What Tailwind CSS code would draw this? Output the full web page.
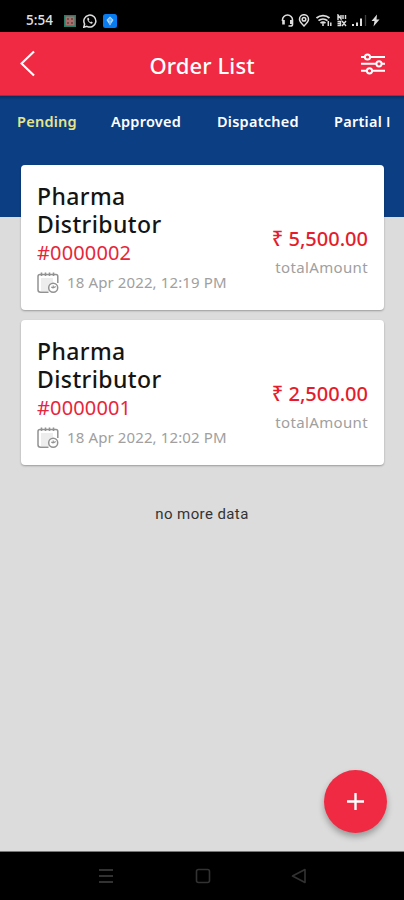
<!DOCTYPE html>
<html lang="en">
<head>
<meta charset="utf-8">
<title>Order List</title>
<script src="https://cdn.jsdelivr.net/npm/@tailwindcss/browser@4"></script>
</head>
<body class="font-['Noto_Sans',sans-serif]">
<svg class="hidden">
  <symbol id="calendar" viewBox="0 0 22 22">
    <path d="M4 6h12v8l-4 5H4z" fill="#ededed"/>
    <path d="M11.500 20.300H3.500Q1 20.300 1 17.800V4.500Q1 2.500 3 2.500H19Q20.800 2.500 20.800 4.300V11" fill="none" stroke="#929292" stroke-width="1.500"/>
    <path d="M4.500 .5v3.500M8.500 .5v3.500M12.500 .5v3.500M16.500 .5v3.500" stroke="#929292" stroke-width="1.600"/>
    <circle cx="16.200" cy="15.800" r="4.500" fill="#fff" stroke="#929292" stroke-width="1.500"/>
    <path d="M16.200 16V13.500M16.200 16l2.500-1.500M16.200 16l-2-1" stroke="#929292" stroke-width="1.200" fill="none"/>
  </symbol>
</svg>
<div class="flex h-[900px] w-[404px] flex-col overflow-hidden bg-[#dcdcdc]">
  <div class="flex h-8 shrink-0 items-center bg-black pt-[9px] pl-[26px] pr-[24px] text-[#dedede]">
    <span class="w-[38px] whitespace-nowrap font-['Open_Sans',sans-serif] text-[13.500px] font-semibold leading-none">5:54</span>
    <svg class="h-3 w-3" viewBox="0 0 12 12"><rect width="12" height="12" fill="#267d68"/><rect x="1.500" y="1.500" width="9" height="9" fill="#aa706b"/><path d="M3 3h2v2H3zM7 3h2v2H7zM3 7h2v2H3zM7 7h2v2H7z" fill="#704f4c"/></svg>
    <svg class="ml-[7px] h-[14px] w-[14px]" viewBox="0 0 14 14" fill="none" stroke="currentColor"><path d="M.8 13.200l.8-3.200a6 6 0 1 1 2.300 2.300z" stroke-width="1.500"/><path d="M4.600 3.800c-1 1.500.6 4.500 3 5.600 1.300.6 2 .1 2.200-.9L8.200 7.500l-.8.800C6.400 7.800 6 7.100 5.600 6.300l.8-.8-.8-1.700z" fill="currentColor" stroke="none"/></svg>
    <svg class="ml-[6px] h-[14px] w-[14px]" viewBox="0 0 14 14"><rect width="14" height="14" rx="2.500" fill="#087bf0"/><path d="M7 2.500L10.500 6 7 11.500 3.500 6z" fill="#b9dcff"/><path d="M7 4v6M5 6h4" stroke="#4aa1fb"/></svg>
    <div class="ml-auto flex items-center">
      <svg class="h-[13px] w-[13px]" viewBox="0 0 13 13" fill="none" stroke="currentColor" stroke-width="1.600"><path d="M1.500 7V6a5 5 0 0 1 10 0v4.500q0 1.500-2 1.500H7.500"/><path d="M2.500 6v4.500M10.300 6v4" stroke-width="2.600"/></svg>
      <svg class="ml-1 h-[13px] w-[12px]" viewBox="0 0 12 13" fill="none" stroke="currentColor" stroke-width="1.500"><path d="M6 12C3.500 9.500 1.500 7.500 1.500 5.200a4.500 4.500 0 0 1 9 0C10.500 7.500 8.500 9.500 6 12z"/><circle cx="6" cy="5.200" r="1.800"/></svg>
      <svg class="ml-[6px] h-[13px] w-4" viewBox="0 0 16 13" fill="none" stroke="currentColor" stroke-width="1.700"><path d="M.5 4a10 10 0 0 1 13 0M2.500 6.700a7 7 0 0 1 9 0M4.500 9.200a4 4 0 0 1 5 0"/><path d="M7 12V9M12.300 7v5M14.800 8.500v3.500" stroke-width="1.500"/></svg>
      <svg class="ml-1 h-[13px] w-[11px]" viewBox="0 0 11 13" fill="none" stroke="currentColor" stroke-width="1.400"><path d="M2 6V1l3 4V1M7 1v4M9.500 1v4M1.500 7.500h3v4h-3M6 7l4 5M10 7l-4 5M1.500 9.500h3"/></svg>
      <svg class="ml-1 h-[13px] w-[17px]" viewBox="0 0 17 13" stroke="currentColor" stroke-width="2"><path d="M2 10v2M6 8.500V12M10 4.500V12"/><path d="M14.500 1v11" stroke="#3d3d3d" stroke-width="1.300"/></svg>
      <svg class="ml-[3px] h-[13px] w-[9px]" viewBox="0 0 9 13"><path d="M6 .5L.5 7h3L2.500 12.500 8.500 5.500h-3z" fill="currentColor"/></svg>
    </div>
  </div>
  <header class="flex h-[64px] shrink-0 items-center justify-between border-b border-[#9c2c4b] bg-[#ef2a42] pl-5 pr-[18px] text-white">
    <svg class="h-[27px] w-4" viewBox="0 0 16 27" fill="none" stroke="currentColor" stroke-width="2.200"><path d="M14 1.500L1.500 13.500 14 25.500"/></svg>
    <h1 class="ml-[9px] mt-[3px] w-[106px] whitespace-nowrap text-[22px] font-medium leading-none tracking-[0.100px]">Order List</h1>
    <svg class="h-[22px] w-[26px]" viewBox="0 0 26 22" fill="#ef2a42" stroke="currentColor" stroke-width="2"><path d="M1 4h24M1 10.800h24M1 17.800h24"/><circle cx="7.500" cy="4" r="2.600"/><circle cx="19" cy="10.800" r="2.600"/><circle cx="9.500" cy="17.800" r="2.600"/></svg>
  </header>
  <div class="relative flex min-h-0 grow flex-col">
    <div class="absolute inset-x-0 top-0 h-[121px] overflow-hidden bg-linear-to-b from-[#092e63] to-[#0b3e83] to-[4px]"></div>
    <nav class="relative ml-[17px] flex h-[69px] shrink-0 whitespace-nowrap pt-[14px] text-[14.500px] font-semibold leading-[22px] tracking-[0.250px] text-white">
      <span class="w-[94px] shrink-0 text-[#e7e58c]">Pending</span>
      <span class="w-[106px] shrink-0">Approved</span>
      <span class="w-[117px] shrink-0">Dispatched</span>
      <span class="shrink-0">Partial <span class="font-['Open_Sans',sans-serif]">I</span></span>
    </nav>
    <main class="relative ml-[21px] mr-5 flex flex-col gap-[10px]">
      <article class="flex h-[145px] justify-between rounded-[4px] bg-white pl-4 pr-4 shadow-[0_1px_2px_rgba(0,0,0,0.300)]">
        <div class="pt-[17px]">
          <h2 class="w-[150px] text-[23px] font-medium leading-[28px] tracking-[0.400px] text-[#141414]">Pharma Distributor</h2>
          <p class="text-[20px] leading-[29px] tracking-[0.150px] text-[#e7263b]">#0000002</p>
          <div class="mt-1 flex h-[22px] items-center whitespace-nowrap text-[15px] text-[#a0a0a0]"><svg class="mt-0.5 mr-2 h-[22px] w-[22px]"><use href="#calendar"/></svg><span class="leading-5 tracking-[0.120px]">18 Apr 2022, 12:19 PM</span></div>
        </div>
        <div class="whitespace-nowrap pt-[60px] text-right">
          <p class="text-[20px] font-medium leading-[28px] text-[#e51c2e]">₹ 5,500.00</p>
          <p class="mt-[3px] text-[15px] leading-[22px] tracking-[0.350px] text-[#a0a0a0]">totalAmount</p>
        </div>
      </article>
      <article class="flex h-[145px] justify-between rounded-[4px] bg-white pl-4 pr-4 shadow-[0_1px_2px_rgba(0,0,0,0.300)]">
        <div class="pt-[17px]">
          <h2 class="w-[150px] text-[23px] font-medium leading-[28px] tracking-[0.400px] text-[#141414]">Pharma Distributor</h2>
          <p class="text-[20px] leading-[29px] tracking-[0.150px] text-[#e7263b]">#0000001</p>
          <div class="mt-1 flex h-[22px] items-center whitespace-nowrap text-[15px] text-[#a0a0a0]"><svg class="mt-0.5 mr-2 h-[22px] w-[22px]"><use href="#calendar"/></svg><span class="leading-5 tracking-[0.120px]">18 Apr 2022, 12:02 PM</span></div>
        </div>
        <div class="whitespace-nowrap pt-[60px] text-right">
          <p class="text-[20px] font-medium leading-[28px] text-[#e51c2e]">₹ 2,500.00</p>
          <p class="mt-[3px] text-[15px] leading-[22px] tracking-[0.350px] text-[#a0a0a0]">totalAmount</p>
        </div>
      </article>
    </main>
    <p class="mt-[39px] text-center font-[Roboto,sans-serif] text-[15px] leading-5 tracking-[0.400px] text-[#333]">no more data</p>
    <button class="absolute bottom-[18px] right-[17px] flex h-[63px] w-[63px] items-center justify-center rounded-full bg-[#ef2a42] text-white shadow-[0_4px_6px_rgba(0,0,0,0.300)]" aria-label="Add order">
      <svg class="h-[17px] w-[17px]" viewBox="0 0 17 17" stroke="currentColor" stroke-width="2.400"><path d="M8.500 0v17M0 8.500h17"/></svg>
    </button>
  </div>
  <footer class="flex h-[49px] shrink-0 items-center justify-between border-t border-[#777] bg-black pl-[98px] pr-[97px] text-[#323232]">
    <svg class="h-4 w-4" viewBox="0 0 16 16" stroke="currentColor" stroke-width="2"><path d="M1 2h14M1 8h14M1 14h14"/></svg>
    <svg class="h-4 w-4" viewBox="0 0 16 16" fill="none" stroke="currentColor" stroke-width="1.600"><rect x="1.500" y="1.500" width="13" height="13" rx="2"/></svg>
    <svg class="h-4 w-4" viewBox="0 0 16 16" fill="none" stroke="currentColor" stroke-width="1.600" stroke-linejoin="round"><path d="M14 1.500v13L1.500 8z"/></svg>
  </footer>
</div>
</body>
</html>
